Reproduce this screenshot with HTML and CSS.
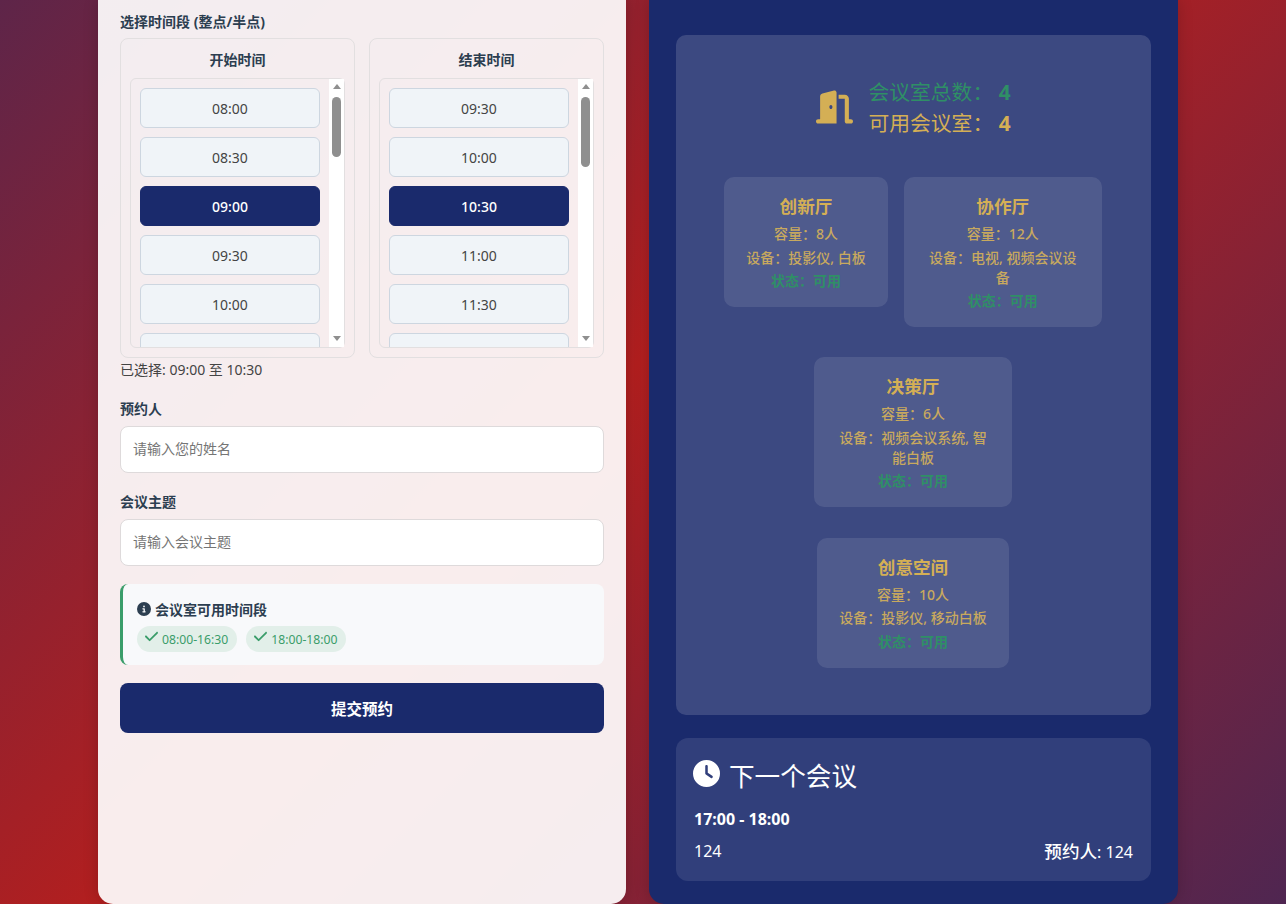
FILE: index.html
```html
<!DOCTYPE html>
<html lang="zh">
<head>
<meta charset="utf-8">
<title>会议室预约</title>
<link rel="stylesheet" href="styles.css">
</head>
<body>
<main class="page">
  <section class="card form-card">
    <div class="label label-first">选择时间段 (整点/半点)</div>
    <div class="time-columns">
      <div class="time-col">
        <div class="time-title">开始时间</div>
        <div class="time-list">
          <div class="slots">
            <div class="slot">08:00</div>
            <div class="slot">08:30</div>
            <div class="slot selected">09:00</div>
            <div class="slot">09:30</div>
            <div class="slot">10:00</div>
            <div class="slot"></div>
          </div>
          <div class="scrollbar">
            <span class="arrow-up"></span>
            <span class="thumb thumb-short"></span>
            <span class="arrow-down"></span>
          </div>
        </div>
      </div>
      <div class="time-col">
        <div class="time-title">结束时间</div>
        <div class="time-list">
          <div class="slots">
            <div class="slot">09:30</div>
            <div class="slot">10:00</div>
            <div class="slot selected">10:30</div>
            <div class="slot">11:00</div>
            <div class="slot">11:30</div>
            <div class="slot"></div>
          </div>
          <div class="scrollbar">
            <span class="arrow-up"></span>
            <span class="thumb thumb-long"></span>
            <span class="arrow-down"></span>
          </div>
        </div>
      </div>
    </div>
    <div class="selected-range">已选择: 09:00 至 10:30</div>

    <label class="label field-label" for="booker">预约人</label>
    <input class="text-input" id="booker" type="text" placeholder="请输入您的姓名">
    <label class="label field-label" for="topic">会议主题</label>
    <input class="text-input" id="topic" type="text" placeholder="请输入会议主题">

    <div class="info-box">
      <div class="info-title">
        <svg class="info-icon" viewBox="0 0 512 512"><path d="M256 512A256 256 0 1 0 256 0a256 256 0 1 0 0 512zM216 336h24V272H216c-13.3 0-24-10.7-24-24s10.7-24 24-24h48c13.3 0 24 10.7 24 24v88h8c13.3 0 24 10.7 24 24s-10.7 24-24 24H216c-13.3 0-24-10.7-24-24s10.7-24 24-24zm40-208a32 32 0 1 1 0 64 32 32 0 1 1 0-64z"/></svg>
        <span>会议室可用时间段</span>
      </div>
      <div class="pills">
        <span class="pill">
          <svg class="check-icon" viewBox="0 0 448 512"><path d="M438.6 105.4c12.5 12.5 12.5 32.8 0 45.3l-256 256c-12.5 12.5-32.8 12.5-45.3 0l-128-128c-12.5-12.5-12.5-32.8 0-45.3s32.8-12.5 45.3 0L160 338.7 393.4 105.4c12.5-12.5 32.8-12.5 45.3 0z"/></svg>
          08:00-16:30
        </span>
        <span class="pill">
          <svg class="check-icon" viewBox="0 0 448 512"><path d="M438.6 105.4c12.5 12.5 12.5 32.8 0 45.3l-256 256c-12.5 12.5-32.8 12.5-45.3 0l-128-128c-12.5-12.5-12.5-32.8 0-45.3s32.8-12.5 45.3 0L160 338.7 393.4 105.4c12.5-12.5 32.8-12.5 45.3 0z"/></svg>
          18:00-18:00
        </span>
      </div>
    </div>
    <button class="submit" type="button">提交预约</button>
  </section>

  <section class="card dark-card">
    <div class="rooms-panel">
      <div class="stats">
        <svg class="door-icon" viewBox="0 0 576 512"><path d="M320 32c0-9.9-4.5-19.2-12.3-25.2S289.8-1.4 280.2 1l-179.9 45C79 51.3 64 70.5 64 92.5V448H32c-17.7 0-32 14.3-32 32s14.3 32 32 32H96 288h32V480 32zM256 256c0 17.7-10.7 32-24 32s-24-14.3-24-32s10.7-32 24-32s24 14.3 24 32zm96-128h96V480c0 17.7 14.3 32 32 32h64c17.7 0 32-14.3 32-32s-14.3-32-32-32H512V128c0-35.3-28.7-64-64-64H352v64z"/></svg>
        <div class="stats-text">
          <div class="stat-total">会议室总数<span class="colon">：</span> <b>4</b></div>
          <div class="stat-free">可用会议室<span class="colon">：</span> <b>4</b></div>
        </div>
      </div>
      <div class="rooms">
        <article class="room">
          <h3>创新厅</h3>
          <p>容量<span class="colon">：</span>8人</p>
          <p>设备<span class="colon">：</span>投影仪, 白板</p>
          <p class="status">状态<span class="colon">：</span>可用</p>
        </article>
        <article class="room">
          <h3>协作厅</h3>
          <p>容量<span class="colon">：</span>12人</p>
          <p>设备<span class="colon">：</span>电视, 视频会议设备</p>
          <p class="status">状态<span class="colon">：</span>可用</p>
        </article>
        <article class="room">
          <h3>决策厅</h3>
          <p>容量<span class="colon">：</span>6人</p>
          <p>设备<span class="colon">：</span>视频会议系统, 智能白板</p>
          <p class="status">状态<span class="colon">：</span>可用</p>
        </article>
        <article class="room">
          <h3>创意空间</h3>
          <p>容量<span class="colon">：</span>10人</p>
          <p>设备<span class="colon">：</span>投影仪, 移动白板</p>
          <p class="status">状态<span class="colon">：</span>可用</p>
        </article>
      </div>
    </div>
    <div class="next-panel">
      <div class="next-head">
        <svg class="clock-icon" viewBox="0 0 512 512"><path d="M256 0a256 256 0 1 1 0 512A256 256 0 1 1 256 0zM232 120V256c0 8 4 15.5 10.7 20l96 64c11 7.4 25.9 4.4 33.3-6.7s4.4-25.9-6.7-33.3L280 243.2V120c0-13.3-10.7-24-24-24s-24 10.7-24 24z"/></svg>
        <h2>下一个会议</h2>
      </div>
      <div class="next-time">17:00 - 18:00</div>
      <div class="next-row">
        <span>124</span>
        <span><span class="booker-label">预约人</span>: 124</span>
      </div>
    </div>
  </section>
</main>
</body>
</html>
```
FILE: styles.css
```css
* {
  box-sizing: border-box;
}

html,
body {
  margin: 0;
  height: 904px;
  overflow: hidden;
}

body {
  font-family: "Noto Sans", "Noto Sans CJK SC", sans-serif;
  font-size: 14px;
  color: #2c3e50;
  background: linear-gradient(135deg, #5e2549 0%, #b21f1f 45.7%, #4f2651 100%);
}

.page {
  display: grid;
  grid-template-columns: 528px 529px;
  column-gap: 23px;
  width: 1080px;
  height: 904px;
  margin-left: 98px;
}

.card {
  border-radius: 0 0 15px 15px;
  box-shadow: 0 0 15px rgba(0, 0, 0, 0.18);
}

.form-card {
  padding: 12px 22px 0;
  background: rgba(255, 255, 255, 0.92);
}

.label {
  display: block;
  height: 20px;
  line-height: 20px;
  font-weight: 700;
  font-size: 14px;
}

.label-first {
  margin-bottom: 6px;
}

.time-columns {
  display: flex;
  gap: 14px;
}

.time-col {
  flex: 1;
  height: 320px;
  padding: 10px 9px 9px;
  border: 1px solid #e2dfe0;
  border-radius: 8px;
}

.time-title {
  height: 22px;
  margin-bottom: 7px;
  line-height: 22px;
  text-align: center;
  font-weight: 700;
}

.time-list {
  display: flex;
  height: 270px;
  border: 1px solid #e2dfe0;
  border-radius: 6px;
}

.slots {
  flex: 1;
  display: flex;
  flex-direction: column;
  gap: 9px;
  padding: 9px;
  min-width: 0;
  overflow: hidden;
}

.slot {
  flex: none;
  height: 40px;
  line-height: 39px;
  text-align: center;
  color: #444;
  background: #f0f4f8;
  border: 1px solid #cdd6e0;
  border-radius: 6px;
}

.slot.selected {
  color: #fff;
  font-weight: 500;
  background: #1a2a6c;
  border-color: #1a2a6c;
}

.scrollbar {
  flex: none;
  display: flex;
  flex-direction: column;
  align-items: center;
  width: 15px;
  background: #fff;
}

.arrow-up,
.arrow-down {
  flex: none;
  width: 0;
  height: 0;
  border-left: 4.5px solid transparent;
  border-right: 4.5px solid transparent;
}

.arrow-up {
  margin-top: 5px;
  border-bottom: 5px solid #8f8f8f;
}

.arrow-down {
  margin-top: auto;
  margin-bottom: 6px;
  border-top: 5px solid #8f8f8f;
}

.thumb {
  flex: none;
  width: 9px;
  margin-top: 8px;
  background: #8f8f8f;
  border-radius: 4.5px;
}

.thumb-short {
  height: 60px;
}

.thumb-long {
  height: 70px;
}

.selected-range {
  height: 20px;
  margin: 2px 0 20px;
  line-height: 20px;
  color: #444;
}

.field-label {
  margin-bottom: 6px;
  line-height: 18px;
}

.text-input {
  display: block;
  width: 100%;
  height: 47px;
  margin-bottom: 20px;
  padding: 0 12px 2px;
  font: inherit;
  background: #fff;
  border: 1px solid #dedadb;
  border-radius: 8px;
  outline: none;
}

.text-input::placeholder {
  color: #757575;
}

.info-box {
  height: 81px;
  margin-top: -2px;
  padding: 15px 14px 13px;
  background: #f8f9fb;
  border-left: 3px solid #3a9d6a;
  border-radius: 8px;
}

.info-title {
  display: flex;
  align-items: center;
  gap: 4px;
  height: 20px;
  margin-bottom: 7px;
  font-weight: 700;
}

.info-icon {
  width: 14px;
  height: 14px;
  fill: #2c3e50;
}

.pills {
  display: flex;
  gap: 9px;
}

.pill {
  display: flex;
  align-items: center;
  gap: 4px;
  height: 26px;
  padding: 0 9px 0 8px;
  font-size: 12.2px;
  color: #3a9d6a;
  background: #e2efe9;
  border-radius: 13px;
}

.check-icon {
  width: 13px;
  height: 15px;
  margin-top: -5px;
  fill: #3a9d6a;
}

.submit {
  display: block;
  width: 100%;
  height: 50px;
  margin-top: 18px;
  font: inherit;
  font-size: 15.5px;
  font-weight: 700;
  color: #fff;
  background: #1a2a6c;
  border: 0;
  border-radius: 8px;
}

.dark-card {
  padding: 35px 27px 0;
  background: #1a2a6c;
}

.rooms-panel {
  height: 680px;
  padding-top: 42px;
  background: rgba(255, 255, 255, 0.15);
  border-radius: 10px;
}

.stats {
  display: flex;
  justify-content: center;
  align-items: center;
  gap: 15px;
  height: 62px;
  margin-bottom: 38px;
}

.door-icon {
  width: 37px;
  height: 34px;
  margin-top: -3px;
  fill: #d4af55;
}

.stats-text {
  font-size: 20.8px;
  line-height: 31px;
}

.colon {
  font-family: "Noto Sans CJK TC", sans-serif;
  line-height: 0;
}

.stat-total {
  color: #2f8f66;
}

.stat-free {
  color: #d4af55;
}

.rooms {
  display: flex;
  flex-wrap: wrap;
  justify-content: center;
  align-items: flex-start;
  column-gap: 16px;
  row-gap: 30.25px;
  padding: 0 41px 0 40px;
}

.room {
  max-width: 198px;
  padding: 17px 22px 16px;
  text-align: center;
  background: rgba(255, 255, 255, 0.1);
  border-radius: 10px;
}

.room h3 {
  margin: 0 0 6px;
  font-size: 17.6px;
  line-height: 24px;
  font-weight: 700;
  color: #d4af55;
}

.room p {
  margin: 3.5px 0 0;
  font-size: 14px;
  line-height: 20px;
  font-weight: 500;
  color: #c8a95e;
}

.room h3 + p {
  margin-top: 0;
}

.room .status {
  font-weight: 700;
  color: #2f8f66;
}

.next-panel {
  height: 143px;
  margin-top: 23px;
  padding: 21px 18px 0 17px;
  color: #fff;
  background: rgba(255, 255, 255, 0.1);
  border-radius: 12px;
}

.next-head {
  display: flex;
  align-items: center;
  gap: 9px;
  height: 36px;
}

.clock-icon {
  width: 27px;
  height: 27px;
  margin-top: -8px;
  fill: #fff;
}

.next-head h2 {
  margin: 0;
  font-size: 25.6px;
  line-height: 36px;
  font-weight: 400;
}

.next-time {
  height: 24px;
  margin-top: 12px;
  padding-left: 1px;
  font-size: 16px;
  line-height: 24px;
  font-weight: 700;
}

.next-row {
  display: flex;
  justify-content: space-between;
  height: 24px;
  margin-top: 8px;
  padding-left: 1px;
  font-size: 16px;
  line-height: 24px;
}

.booker-label {
  font-size: 17.6px;
  font-weight: 500;
}
```
